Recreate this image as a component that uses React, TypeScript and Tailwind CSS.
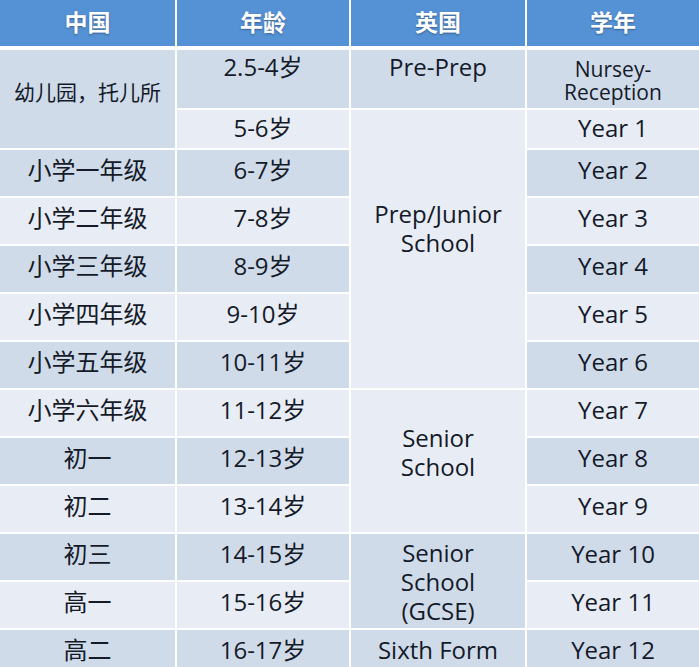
import type { ReactNode } from 'react'

const DARK = 'bg-[#d0dbea]'
const LIGHT = 'bg-[#e8ecf5]'
const BASE = 'text-[24px] leading-[29px] items-center pb-[8px]'

type Cell = {
  text: ReactNode
  col: string
  row: string
  tone: string
  size?: string
}

// rows: 1 = 2.5-4, 2 = 5-6, 3..13 = 小学一年级 .. 高二
const cells: Cell[] = [
  { text: '幼儿园，托儿所', col: 'col-start-1', row: 'row-start-1 row-span-2', tone: DARK, size: 'text-[21px] leading-[29px] items-center pb-[14px]' },
  { text: '小学一年级', col: 'col-start-1', row: 'row-start-3', tone: DARK },
  { text: '小学二年级', col: 'col-start-1', row: 'row-start-4', tone: LIGHT },
  { text: '小学三年级', col: 'col-start-1', row: 'row-start-5', tone: DARK },
  { text: '小学四年级', col: 'col-start-1', row: 'row-start-6', tone: LIGHT },
  { text: '小学五年级', col: 'col-start-1', row: 'row-start-7', tone: DARK },
  { text: '小学六年级', col: 'col-start-1', row: 'row-start-8', tone: LIGHT },
  { text: '初一', col: 'col-start-1', row: 'row-start-9', tone: DARK },
  { text: '初二', col: 'col-start-1', row: 'row-start-10', tone: LIGHT },
  { text: '初三', col: 'col-start-1', row: 'row-start-11', tone: DARK },
  { text: '高一', col: 'col-start-1', row: 'row-start-12', tone: LIGHT },
  { text: '高二', col: 'col-start-1', row: 'row-start-13', tone: DARK },

  { text: '2.5-4岁', col: 'col-start-2', row: 'row-start-1', tone: DARK, size: 'text-[24px] leading-[29px] items-start pt-[2px]' },
  { text: '5-6岁', col: 'col-start-2', row: 'row-start-2', tone: LIGHT, size: 'text-[24px] leading-[29px] items-center pb-[3px]' },
  { text: '6-7岁', col: 'col-start-2', row: 'row-start-3', tone: DARK },
  { text: '7-8岁', col: 'col-start-2', row: 'row-start-4', tone: LIGHT },
  { text: '8-9岁', col: 'col-start-2', row: 'row-start-5', tone: DARK },
  { text: '9-10岁', col: 'col-start-2', row: 'row-start-6', tone: LIGHT },
  { text: '10-11岁', col: 'col-start-2', row: 'row-start-7', tone: DARK },
  { text: '11-12岁', col: 'col-start-2', row: 'row-start-8', tone: LIGHT },
  { text: '12-13岁', col: 'col-start-2', row: 'row-start-9', tone: DARK },
  { text: '13-14岁', col: 'col-start-2', row: 'row-start-10', tone: LIGHT },
  { text: '14-15岁', col: 'col-start-2', row: 'row-start-11', tone: DARK },
  { text: '15-16岁', col: 'col-start-2', row: 'row-start-12', tone: LIGHT },
  { text: '16-17岁', col: 'col-start-2', row: 'row-start-13', tone: DARK },

  { text: 'Pre-Prep', col: 'col-start-3', row: 'row-start-1', tone: DARK, size: 'text-[24px] leading-[29px] items-start pt-[2px]' },
  { text: <>Prep/Junior<br />School</>, col: 'col-start-3', row: 'row-start-2 row-span-6', tone: LIGHT, size: 'text-[24px] leading-[29px] items-center pb-[43px]' },
  { text: <>Senior<br />School</>, col: 'col-start-3', row: 'row-start-8 row-span-3', tone: LIGHT, size: 'text-[24px] leading-[29px] items-center pb-[19px]' },
  { text: <>Senior<br />School<br />(GCSE)</>, col: 'col-start-3', row: 'row-start-11 row-span-2', tone: DARK, size: 'text-[24px] leading-[29px] items-center pb-0' },
  { text: 'Sixth Form', col: 'col-start-3', row: 'row-start-13', tone: DARK },

  { text: <>Nursey-<br />Reception</>, col: 'col-start-4', row: 'row-start-1', tone: DARK, size: 'text-[21px] leading-[23px] items-center pt-[4px]' },
  { text: 'Year 1', col: 'col-start-4', row: 'row-start-2', tone: LIGHT, size: 'text-[24px] leading-[29px] items-center pb-[3px]' },
  { text: 'Year 2', col: 'col-start-4', row: 'row-start-3', tone: DARK },
  { text: 'Year 3', col: 'col-start-4', row: 'row-start-4', tone: LIGHT },
  { text: 'Year 4', col: 'col-start-4', row: 'row-start-5', tone: DARK },
  { text: 'Year 5', col: 'col-start-4', row: 'row-start-6', tone: LIGHT },
  { text: 'Year 6', col: 'col-start-4', row: 'row-start-7', tone: DARK },
  { text: 'Year 7', col: 'col-start-4', row: 'row-start-8', tone: LIGHT },
  { text: 'Year 8', col: 'col-start-4', row: 'row-start-9', tone: DARK },
  { text: 'Year 9', col: 'col-start-4', row: 'row-start-10', tone: LIGHT },
  { text: 'Year 10', col: 'col-start-4', row: 'row-start-11', tone: DARK },
  { text: 'Year 11', col: 'col-start-4', row: 'row-start-12', tone: LIGHT },
  { text: 'Year 12', col: 'col-start-4', row: 'row-start-13', tone: DARK },
]

const headers = ['中国', '年龄', '英国', '学年']

export default function App() {
  return (
    <div
      className="w-[699px] h-[667px] overflow-hidden bg-white text-[#141a28]"
      style={{ fontFamily: '"Open Sans", "Noto Sans CJK SC", sans-serif' }}
    >
      {/* header */}
      <div className="grid grid-cols-[175px_172px_174px_1fr] gap-x-[2px] mb-[4px]">
        {headers.map((h) => (
          <div
            key={h}
            className="h-[46px] bg-[#5591d5] flex items-center justify-center pb-[4px] text-white text-[23px] font-bold [text-shadow:0_1px_2px_rgba(0,0,0,0.35)]"
            style={{ fontFamily: '"Noto Sans CJK SC", sans-serif' }}
          >
            {h}
          </div>
        ))}
      </div>

      {/* body */}
      <div className="grid grid-cols-[175px_172px_174px_1fr] grid-rows-[58px_38px_repeat(11,46px)] gap-x-[2px] gap-y-[2px]">
        {cells.map((c, i) => (
          <div
            key={i}
            className={`${c.col} ${c.row} ${c.tone} flex justify-center text-center ${c.size ?? BASE}`}
          >
            <span>{c.text}</span>
          </div>
        ))}
      </div>
    </div>
  )
}
